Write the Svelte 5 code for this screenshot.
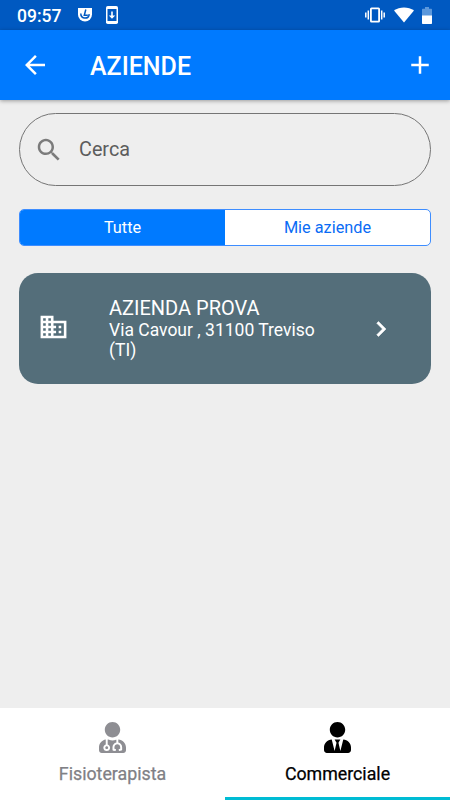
<script lang="ts">
  let query = $state('');
  let filter = $state('Tutte');
  let tab = $state('Commerciale');

  const filters = ['Tutte', 'Mie aziende'];

  const companies = [{ name: 'AZIENDA PROVA', address: 'Via Cavour , 31100 Treviso (TI)' }];

  const tabs = [
    {
      label: 'Fisioterapista',
      icon: 'M224 256c70.7 0 128-57.3 128-128S294.7 0 224 0 96 57.3 96 128s57.3 128 128 128zM104 424c0 13.3 10.7 24 24 24s24-10.7 24-24-10.7-24-24-24-24 10.7-24 24zm216-135.4v49c36.5 7.4 64 39.8 64 78.4v41.7c0 7.6-5.4 14.2-12.9 15.7l-32.2 6.4c-4.3.9-8.5-1.9-9.4-6.3l-3.1-15.7c-.9-4.3 1.9-8.6 6.3-9.4l19.3-3.9V416c0-62.8-96-65.1-96 1.9v26.7l19.3 3.9c4.3.9 7.1 5.1 6.3 9.4l-3.1 15.7c-.9 4.3-5.1 7.1-9.4 6.3l-31.2-4.2c-7.9-1.1-13.8-7.8-13.8-15.9V416c0-38.6 27.5-70.9 64-78.4v-45.2c-2.2.7-4.4 1.1-6.6 1.9-18 6.3-37.3 9.8-57.4 9.8s-39.4-3.5-57.4-9.8c-7.4-2.6-14.9-4.2-22.6-5.2v81.6c23.1 6.9 40 28.1 40 53.4 0 30.9-25.1 56-56 56s-56-25.1-56-56c0-25.3 16.9-46.5 40-53.4v-80.4C48.5 301 0 355.8 0 422.4v44.8C0 491.9 20.1 512 44.8 512h358.4c24.7 0 44.8-20.1 44.8-44.8v-44.8c0-72-56.8-130.3-128-133.8z',
    },
    {
      label: 'Commerciale',
      icon: 'M224 256c70.7 0 128-57.3 128-128S294.7 0 224 0 96 57.3 96 128s57.3 128 128 128zm95.8 32.6L272 480l-32-136 32-56h-96l32 56-32 136-47.8-191.4C56.9 292 0 350.3 0 422.4V464c0 26.5 21.5 48 48 48h352c26.5 0 48-21.5 48-48v-41.6c0-72.1-56.9-130.4-128.2-133.8z',
    },
  ];
</script>

<div class="screen">
  <div class="status">
    <span class="clock">09:57</span>
    <svg class="app" width="16" height="16" viewBox="0 0 16 16">
      <path fill="#fff" d="M1 1h14v6.500a7 7 0 0 1-14 0z" />
      <path fill="none" stroke="#0059c1" stroke-width="1.500" d="M8.800 2.500L7.300 8.200h3.500M3.800 6.500c-.3 6 8.100 6 8.400.6" />
    </svg>
    <svg class="update" width="12" height="18" viewBox="0 0 12 18">
      <rect width="12" height="18" rx="1.800" fill="#fff" />
      <path fill="#0059c1" d="M1.500 3h9v12h-9z" />
      <path fill="#fff" d="M5.200 5.500h1.600v4h2.400L6 12.700 2.800 9.500h2.400z" />
    </svg>
    <span class="spacer"></span>
    <svg width="22" height="16" viewBox="0 0 22 16">
      <rect x="6.900" y="1.400" width="8.200" height="13.200" rx=".6" fill="none" stroke="#fff" stroke-width="1.800" />
      <path fill="none" stroke="#fff" stroke-width="1.500" d="M4.300 3.500v9M1.800 5.500v5M17.700 3.500v9M20.200 5.500v5" />
    </svg>
    <svg class="wifi" width="20" height="16" viewBox="0 0 20 16">
      <path fill="#fff" d="M10 15.500L0 3.600C5.500-.7 14.500-.7 20 3.600z" />
    </svg>
    <svg class="battery" width="10" height="17" viewBox="0 0 10 17">
      <path fill="#5b98dc" d="M3 0h4v1.700h2.300c.4 0 .7.3.7.7V9H0V2.400c0-.4.3-.7.7-.7H3z" />
      <path fill="#fff" d="M0 8.500h10v7.700c0 .5-.3.8-.7.8H.7c-.4 0-.7-.3-.7-.8z" />
    </svg>
  </div>

  <header>
    <button aria-label="Indietro">
      <svg width="30" height="30" viewBox="0 0 24 24">
        <path d="M20 11H7.830l5.590-5.590L12 4l-8 8 8 8 1.410-1.410L7.830 13H20v-2z" />
      </svg>
    </button>
    <h1>AZIENDE</h1>
    <button aria-label="Aggiungi">
      <svg width="30" height="30" viewBox="0 0 24 24">
        <path d="M19 13h-6v6h-2v-6H5v-2h6V5h2v6h6v2z" />
      </svg>
    </button>
  </header>

  <main>
    <label class="search">
      <svg width="30" height="30" viewBox="0 0 24 24">
        <path d="M15.500 14h-.79l-.28-.27C15.410 12.590 16 11.110 16 9.500 16 5.910 13.090 3 9.500 3S3 5.910 3 9.500 5.910 16 9.500 16c1.610 0 3.090-.59 4.230-1.570l.27.28v.79l5 4.990L20.490 19l-4.990-5zm-6 0C7.010 14 5 11.990 5 9.500S7.010 5 9.500 5 14 7.010 14 9.500 11.990 14 9.500 14z" />
      </svg>
      <input placeholder="Cerca" bind:value={query} />
    </label>

    <div class="segmented">
      {#each filters as name}
        <button class:selected={filter === name} onclick={() => (filter = name)}>{name}</button>
      {/each}
    </div>

    {#each companies as company}
      <div class="card">
        <svg class="building" width="31" height="30" viewBox="0 0 24 24" preserveAspectRatio="none">
          <path d="M12 7V3H2v18h20V7H12zM6 19H4v-2h2v2zm0-4H4v-2h2v2zm0-4H4V9h2v2zm0-4H4V5h2v2zm4 12H8v-2h2v2zm0-4H8v-2h2v2zm0-4H8V9h2v2zm0-4H8V5h2v2zm10 12h-8v-2h2v-2h-2v-2h2v-2h-2V9h8v10zm-2-8h-2v2h2v-2zm0 4h-2v2h2v-2z" />
        </svg>
        <div class="info">
          <div class="name">{company.name}</div>
          <div class="address">{company.address}</div>
        </div>
        <svg width="30" height="30" viewBox="0 0 24 24">
          <path d="M10 6L8.590 7.410 13.170 12l-4.580 4.590L10 18l6-6z" stroke="currentColor" stroke-width=".4" />
        </svg>
      </div>
    {/each}
  </main>

  <nav>
    {#each tabs as item}
      <button class:active={tab === item.label} onclick={() => (tab = item.label)}>
        <svg width="27" height="31" viewBox="0 0 448 512">
          <path d={item.icon} />
        </svg>
        <span>{item.label}</span>
      </button>
    {/each}
  </nav>
</div>

<style>
  :global(body) {
    margin: 0;
  }
  .screen {
    display: flex;
    flex-direction: column;
    width: 450px;
    height: 800px;
    overflow: hidden;
    background: #eee;
    font-family: Roboto, sans-serif;
  }
  svg {
    display: block;
    flex: none;
    fill: currentColor;
  }
  button {
    padding: 0;
    border: 0;
    background: none;
    color: inherit;
    font: inherit;
  }
  .status {
    display: flex;
    align-items: center;
    box-sizing: border-box;
    height: 30px;
    padding: 0 18px 0 17px;
    background: #0059c1;
    color: #fff;
  }
  .clock {
    width: 60px;
    margin-top: 2px;
    font-size: 17.500px;
    font-weight: 500;
    line-height: 30px;
  }
  .update {
    margin-left: 13px;
  }
  .spacer {
    flex: 1;
  }
  .wifi {
    margin-left: 8px;
  }
  .battery {
    margin-left: 8px;
  }
  header {
    display: flex;
    align-items: center;
    box-sizing: border-box;
    height: 70px;
    padding: 0 15px 0 20px;
    background: #007aff;
    color: #fff;
    box-shadow: 0 1px 4px rgba(0, 0, 0, 0.35);
    z-index: 1;
  }
  h1 {
    flex: 1;
    margin: 4px 0 0 40px;
    font-size: 25px;
    font-weight: 500;
    line-height: 30px;
  }
  main {
    flex: 1;
    padding: 13px 19px 0;
  }
  .search {
    display: flex;
    align-items: center;
    box-sizing: border-box;
    height: 73px;
    padding: 0 14px;
    border: 1px solid #757575;
    border-radius: 37px;
    color: #7b7b7b;
  }
  .search input {
    flex: 1;
    min-width: 0;
    margin: 0 0 1px 15px;
    padding: 0;
    border: 0;
    outline: 0;
    background: none;
    color: #555;
    font: 19.800px Roboto, sans-serif;
  }
  .search input::placeholder {
    color: #5c5c5c;
  }
  .segmented {
    display: flex;
    box-sizing: border-box;
    height: 37px;
    margin-top: 23px;
    overflow: hidden;
    border: 1px solid #3d8dff;
    border-radius: 5px;
    background: #fff;
    color: #0a6cf5;
    font-size: 16.300px;
  }
  .segmented button {
    flex: 1;
    padding-bottom: 1px;
  }
  .segmented .selected {
    background: #007aff;
    color: #fff;
  }
  .card {
    display: flex;
    align-items: center;
    box-sizing: border-box;
    height: 111px;
    margin-top: 27px;
    padding: 0 35px 0 19px;
    border-radius: 19px;
    background: #546e7a;
    color: #fff;
  }
  .building {
    margin-bottom: 4px;
  }
  .info {
    flex: 1;
    margin: 0 37px 1px 40px;
    font-size: 17.500px;
    line-height: 20px;
  }
  .name {
    font-size: 20px;
    line-height: 23px;
  }
  nav {
    display: flex;
    height: 92px;
    background: #fff;
    color: #808085;
    font-size: 17.800px;
  }
  nav button {
    display: flex;
    flex: 1;
    flex-direction: column;
    align-items: center;
    box-sizing: border-box;
    padding-top: 14px;
    border-bottom: 3px solid transparent;
  }
  nav svg {
    color: #8e8e93;
  }
  /* thin stroke puts the label between regular and medium */
  nav span {
    margin-top: 11px;
    line-height: 20px;
    -webkit-text-stroke: 0.25px currentColor;
  }
  nav .active {
    border-color: #00bcd4;
    color: #000;
  }
  nav .active svg {
    color: #000;
  }
</style>
